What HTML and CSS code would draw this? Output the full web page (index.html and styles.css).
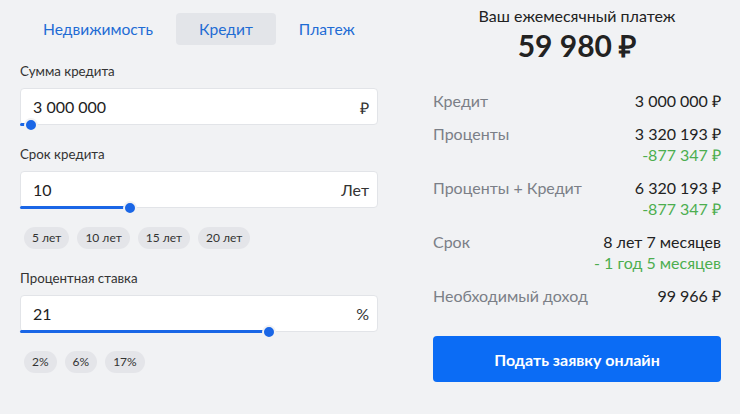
FILE: index.html
```html
<!DOCTYPE html>
<html lang="ru">
<head>
    <meta charset="UTF-8">
    <meta name="viewport" content="width=device-width, initial-scale=1.0">
    <title>Кредитный калькулятор</title>
    <link rel="stylesheet" href="styles.css">
</head>
<body>
    <div class="calc">
        <div class="params">
            <div class="tabs">
                <button class="tab">Недвижимость</button>
                <button class="tab active">Кредит</button>
                <button class="tab">Платеж</button>
            </div>

            <div class="field">
                <div class="label">Сумма кредита</div>
                <div class="input-wrap">
                    <input type="text" value="3 000 000">
                    <span class="unit">₽</span>
                    <div class="slider"><div class="fill" style="width: 3%"></div></div>
                </div>
            </div>

            <div class="field">
                <div class="label">Срок кредита</div>
                <div class="input-wrap">
                    <input type="text" value="10">
                    <span class="unit">Лет</span>
                    <div class="slider"><div class="fill" style="width: 30.7%"></div></div>
                </div>
                <div class="chips">
                    <span class="chip">5 лет</span>
                    <span class="chip">10 лет</span>
                    <span class="chip">15 лет</span>
                    <span class="chip">20 лет</span>
                </div>
            </div>

            <div class="field">
                <div class="label">Процентная ставка</div>
                <div class="input-wrap">
                    <input type="text" value="21">
                    <span class="unit">%</span>
                    <div class="slider"><div class="fill" style="width: 69.6%"></div></div>
                </div>
                <div class="chips">
                    <span class="chip">2%</span>
                    <span class="chip">6%</span>
                    <span class="chip">17%</span>
                </div>
            </div>
        </div>

        <div class="result">
            <div class="result-title">Ваш ежемесячный платеж</div>
            <div class="result-sum">59 980 ₽</div>

            <div class="rows">
                <div class="row">
                    <span class="name">Кредит</span>
                    <span class="value">3 000 000 ₽</span>
                </div>
                <div class="row">
                    <span class="name">Проценты</span>
                    <span class="value">3 320 193 ₽<span class="diff">-877 347 ₽</span></span>
                </div>
                <div class="row">
                    <span class="name">Проценты + Кредит</span>
                    <span class="value">6 320 193 ₽<span class="diff">-877 347 ₽</span></span>
                </div>
                <div class="row">
                    <span class="name">Срок</span>
                    <span class="value">8 лет 7 месяцев<span class="diff">- 1 год 5 месяцев</span></span>
                </div>
                <div class="row">
                    <span class="name">Необходимый доход</span>
                    <span class="value">99 966 ₽</span>
                </div>
            </div>

            <button class="apply">Подать заявку онлайн</button>
        </div>
    </div>
</body>
</html>
```

FILE: styles.css
```css
body {
    margin: 0;
    background-color: #f1f2f4;
    font-family: Lato, "Open Sans", sans-serif;
    color: #222;
}

.calc {
    display: grid;
    grid-template-columns: 358px 288px;
    column-gap: 55px;
    padding: 0 20px;
}

/* left column */
.tabs {
    display: flex;
    margin-top: 13px;
}

.tab {
    font-family: inherit;
    font-size: 15.6px;
    color: #1f6cd4;
    background: none;
    border: none;
    border-radius: 4px;
    height: 32px;
    padding: 0 23px;
    cursor: pointer;
}

.tab.active {
    background-color: #e3e5e9;
}

.field {
    margin-top: 17px;
}

.field + .field {
    margin-top: 20px;
}

.label {
    font-size: 13.3px;
    line-height: 18px;
    color: #333;
    margin-bottom: 8px;
}

.input-wrap {
    position: relative;
}

.input-wrap input {
    display: block;
    box-sizing: border-box;
    width: 100%;
    height: 37px;
    padding: 0 40px 0 12px;
    font-family: inherit;
    font-size: 16px;
    color: #222;
    background-color: #fff;
    border: 1px solid #e2e4e8;
    border-radius: 4px;
    outline: none;
}

.unit {
    position: absolute;
    right: 9px;
    top: 9px;
    font-size: 16px;
    color: #333;
}

.slider {
    position: absolute;
    left: 0;
    right: 0;
    bottom: -1px;
    height: 3px;
}

.fill {
    position: relative;
    height: 3px;
    background-color: #1a66e6;
    border-radius: 2px;
}

.fill::after {
    content: "";
    position: absolute;
    right: -7px;
    top: -5px;
    width: 10px;
    height: 10px;
    border-radius: 50%;
    background-color: #1a66e6;
    border: 2px solid #f1f2f4;
}

.chips {
    display: flex;
    gap: 8px;
    margin-top: 19px;
    padding-left: 4px;
}

.chip {
    font-size: 12px;
    line-height: 22px;
    padding: 0 8px;
    border-radius: 11px;
    background-color: #e4e5e9;
    color: #333;
}

/* right column */
.result {
    padding-top: 6px;
}

.result-title {
    text-align: center;
    font-size: 16px;
    line-height: 20px;
    color: #222;
}

.result-sum {
    text-align: center;
    font-size: 30px;
    font-weight: bold;
    line-height: 36px;
    margin-top: 1px;
}

.rows {
    margin-top: 27px;
}

.row {
    display: flex;
    justify-content: space-between;
    font-size: 16px;
    line-height: 21px;
    margin-bottom: 12px;
}

.name {
    color: #7b7f87;
}

.value {
    text-align: right;
    color: #222;
}

.diff {
    display: block;
    color: #4cae4f;
}

.apply {
    display: block;
    width: 100%;
    height: 46px;
    margin-top: 30px;
    font-family: inherit;
    font-size: 16px;
    font-weight: bold;
    color: #fff;
    background-color: #0b6cf5;
    border: none;
    border-radius: 4px;
    cursor: pointer;
}
```
